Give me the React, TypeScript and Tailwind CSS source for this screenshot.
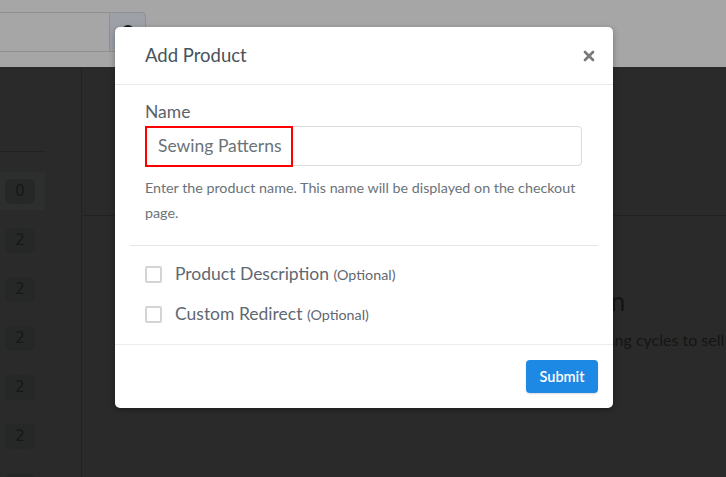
import { X } from 'lucide-react'

const badges = ['0', '2', '2', '2', '2', '2']

function Background() {
  return (
    <div className="flex h-[477px] flex-col overflow-hidden bg-[#2a2a2a]">
      {/* top bar (dimmed) */}
      <div className="flex h-[67px] shrink-0 items-start bg-[#a6a6a6] pt-[12px]">
        <div className="ml-[-10px] h-[40px] w-[119px] rounded-l border border-[#8f8f8f] border-r-0" />
        <div className="relative h-[40px] w-[37px] rounded-r border border-[#8f8f8f] bg-[#9da0a7]">
          <div className="absolute left-[12px] top-[12px] h-[12px] w-[12px] rounded-full bg-[#1a1a1a]" />
        </div>
      </div>
      <div className="flex flex-1">
        {/* sidebar */}
        <div className="w-[82px] shrink-0 border-r border-[#222222]">
          <div className="mt-[84px] w-[45px] border-t border-[#222222]" />
          <div className="flex w-[45px] flex-col gap-[11px] pt-[20px]">
            {badges.map((b, i) => (
              <div
                key={i}
                className={`flex h-[38px] items-center pl-[5px] ${i === 0 ? 'bg-[#2d2e2e]' : ''}`}
              >
                <div className="flex h-[25px] w-[30px] items-center justify-center rounded-md bg-[#262727] text-[15px] text-[#161818] [font-family:'DejaVu_Sans',sans-serif]">
                  {b}
                </div>
              </div>
            ))}
            <div className="flex h-[38px] items-center pl-[5px]">
              <div className="h-[25px] w-[30px] rounded-md bg-[#262727]" />
            </div>
          </div>
        </div>
        {/* main */}
        <div className="flex flex-1 flex-col">
          <div className="h-[149px] border-b border-[#222222]" />
          <div className="pl-[514px] pt-[72px] text-[26px] leading-none text-[#141414] [font-family:Lato,sans-serif]">
            on
          </div>
          <div className="whitespace-nowrap pl-[525px] pt-[14px] text-[16px] text-[#151515] [font-family:Lato,sans-serif]">
            ling cycles to sell
          </div>
        </div>
      </div>
    </div>
  )
}

function Checkbox({ label }: { label: string }) {
  return (
    <label className="flex h-[24px] items-center gap-[13px]">
      <span className="h-[17px] w-[17px] rounded-[2px] border-2 border-[#d4d4d4] bg-white" />
      <span className="text-[17.5px] text-[#5f6870]">
        {label} <span className="text-[14.3px]">(Optional)</span>
      </span>
    </label>
  )
}

function AddProductModal() {
  return (
    <div className="absolute left-[115px] top-[27px] w-[498px] rounded-[5px] bg-white [font-family:Lato,sans-serif] shadow-[0_2px_6px_rgba(0,0,0,0.3)]">
      <div className="flex h-[58px] items-center justify-between border-b border-[#e9e9e9] pl-[30px] pr-[16px]">
        <h2 className="text-[18.5px] text-[#47525b]">Add Product</h2>
        <X className="h-[16px] w-[16px] text-[#7a7a7a]" strokeWidth={4} />
      </div>
      <div className="px-[30px] pt-[17px]">
        <div className="text-[17.5px] leading-[20px] text-[#5b636a]">Name</div>
        <div className="relative mt-[4px] h-[40px] w-[437px] rounded border border-[#dcdcdc]">
          <div className="absolute left-[-1px] top-[-1px] flex h-[41px] w-[148px] items-center border-2 border-[#ff0000] pl-[11px] text-[17.5px] text-[#6a7378]">
            Sewing Patterns
          </div>
        </div>
        <p className="mt-[9px] text-[14.3px] leading-[25px] text-[#6a7378]">
          Enter the product name. This name will be displayed on the checkout page.
        </p>
      </div>
      <div className="mx-[15px] mt-[20px] border-t border-[#e5e5e5]" />
      <div className="flex flex-col gap-[16px] px-[30px] pb-[18px] pt-[16px]">
        <Checkbox label="Product Description" />
        <Checkbox label="Custom Redirect" />
      </div>
      <div className="flex justify-end border-t border-[#ececec] px-[15px] pb-[15px] pt-[15px]">
        <button className="h-[33px] w-[72px] rounded-[4px] bg-[#1e88e5] text-[14.5px] font-semibold text-white shadow-[0_1px_2px_rgba(0,0,0,0.15)]">
          Submit
        </button>
      </div>
    </div>
  )
}

export default function App() {
  return (
    <div className="relative h-[477px] w-[726px] overflow-hidden">
      <Background />
      <AddProductModal />
    </div>
  )
}
